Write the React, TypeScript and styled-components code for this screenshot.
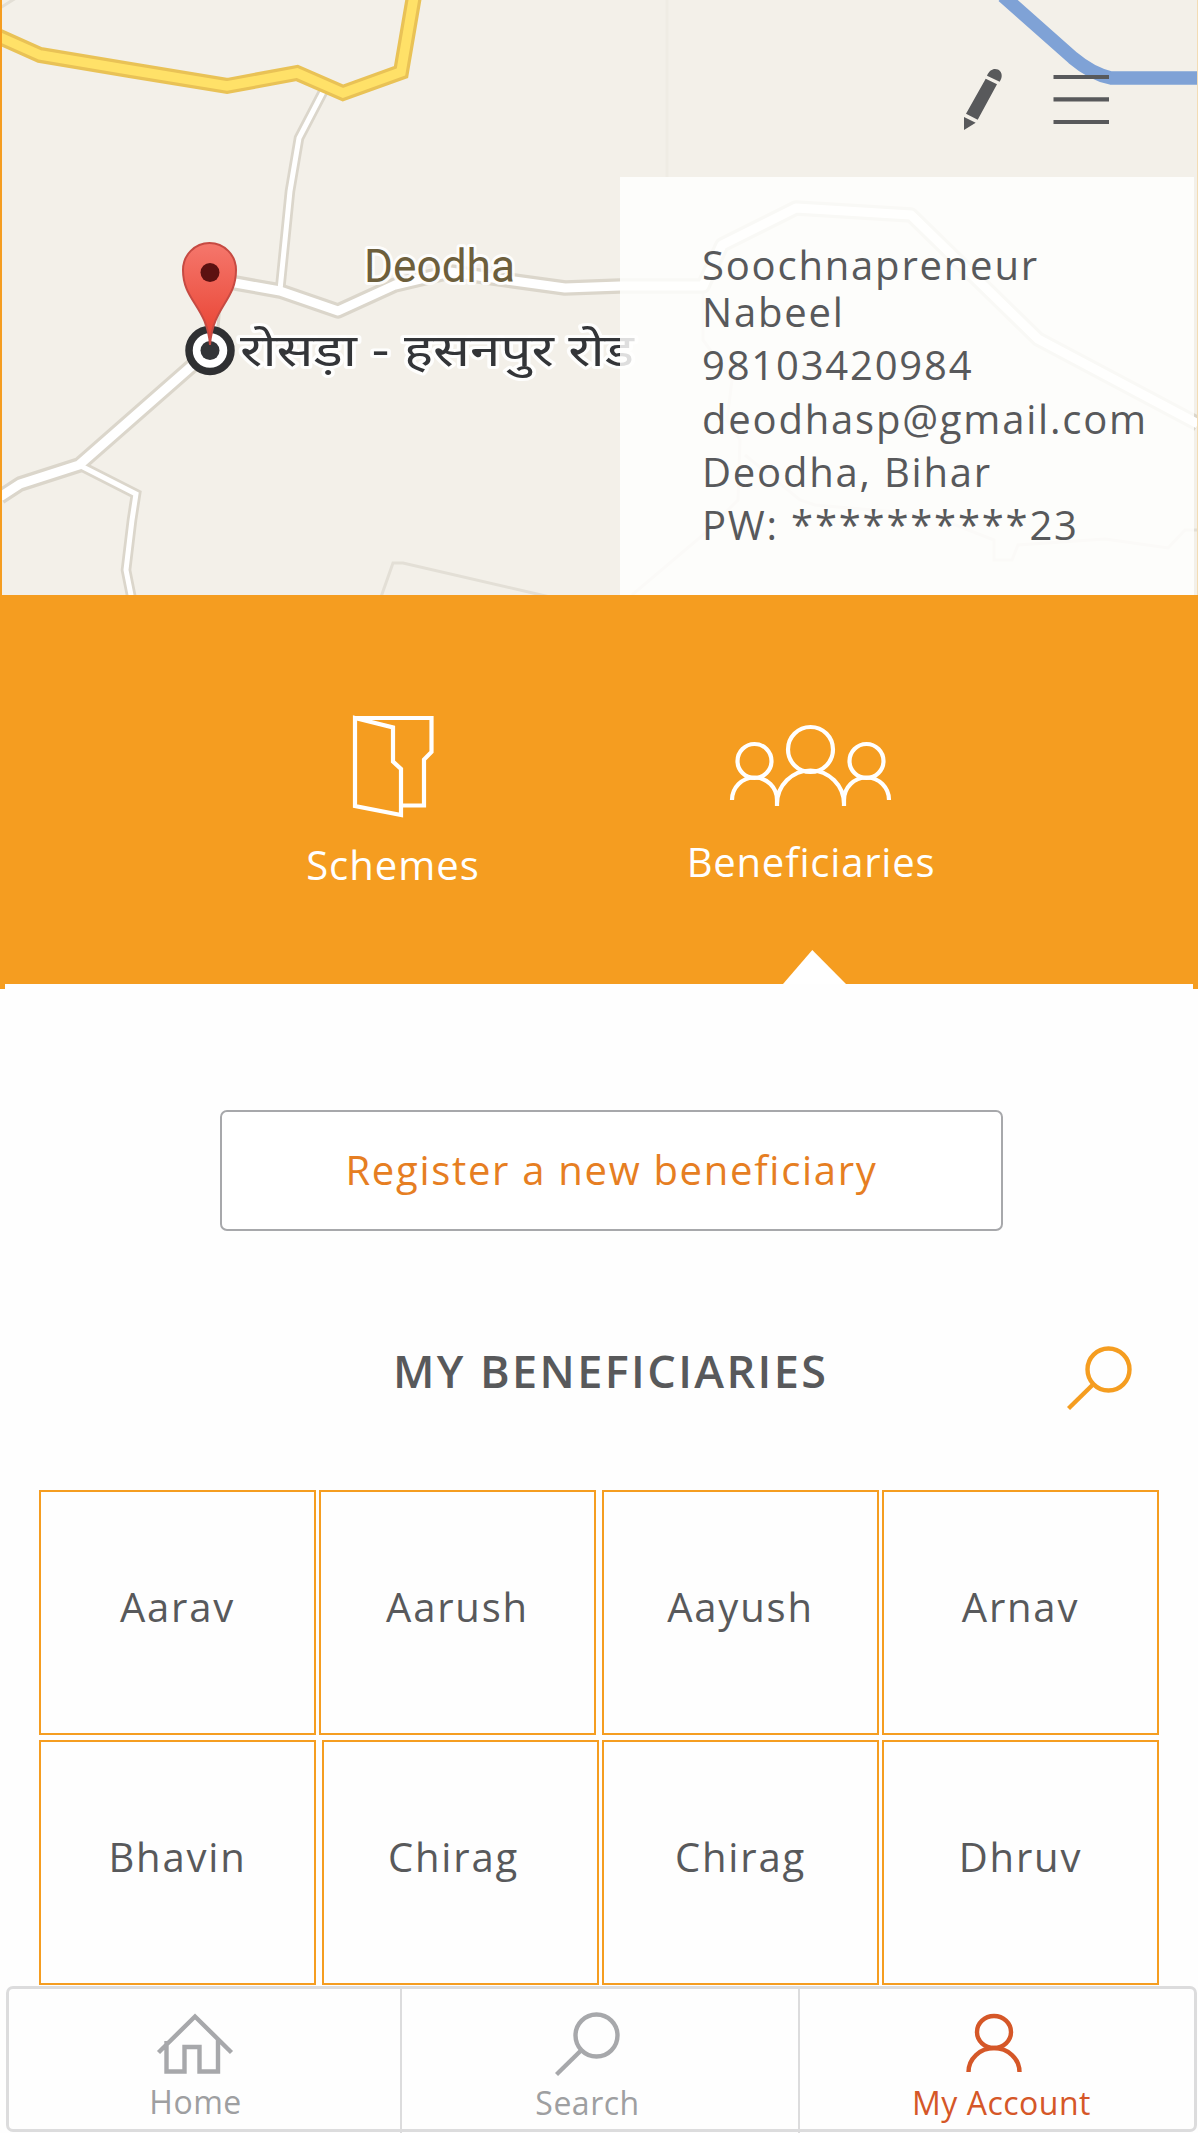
import React from "react";
import styled, { createGlobalStyle } from "styled-components";

const GlobalStyle = createGlobalStyle`
  *, *::before, *::after { box-sizing: border-box; }
  html, body { margin: 0; padding: 0; background: #fff; }
`;

const ORANGE = "#f59d20";
const INK = "#58595b";
const GREY = "#a7a8ab";
const RUST = "#d55728";

const Screen = styled.main`
  width: 1198px;
  height: 2133px;
  overflow: hidden;
  display: flex;
  flex-direction: column;
  background: #fefefe;
  color: ${INK};
  font-family: "Open Sans", "Noto Sans", sans-serif;
  font-size: 40px;
  line-height: 54px;
`;

const Hero = styled.header`
  position: relative;
  height: 595px;
  flex: none;
  border-left: 2px solid ${ORANGE};
  border-right: 1px solid #f3dcb4;
  padding-right: 3px;
  background: #f3f0e9;
  display: flex;
  flex-direction: column;
  align-items: flex-end;
`;

const MapLayer = styled.svg`
  position: absolute;
  left: 0;
  top: 0;
  width: 1195px;
  height: 595px;
`;

const Actions = styled.div`
  position: relative;
  height: 177px;
  padding: 68px 85px 0 0;
  display: flex;
  gap: 50px;
  align-items: flex-start;
`;

const IconButton = styled.button`
  border: 0;
  padding: 0;
  background: none;
  display: block;
  line-height: 0;
  svg { display: block; overflow: visible; }
`;

const Profile = styled.section`
  position: relative;
  width: 574px;
  height: 418px;
  padding: 61px 0 0 82px;
  background: rgba(255, 255, 254, 0.84);
`;

const ProfileLine = styled.p<{ $tight?: boolean }>`
  margin: 0;
  height: ${(p) => (p.$tight ? 47 : 53.3)}px;
  line-height: 54px;
  letter-spacing: 1.8px;
  white-space: nowrap;
`;

const Tabs = styled.nav`
  position: relative;
  height: 389px;
  flex: none;
  display: flex;
  background: ${ORANGE};
  color: #fff;
`;

const Tab = styled.a<{ $width: number; $top: number; $gap: number; $offset: number; $spacing: number }>`
  width: ${(p) => p.$width}px;
  margin-left: ${(p) => p.$offset}px;
  padding-top: ${(p) => p.$top}px;
  display: flex;
  flex-direction: column;
  align-items: center;
  gap: ${(p) => p.$gap}px;
  letter-spacing: ${(p) => p.$spacing}px;
  white-space: nowrap;
  svg { display: block; overflow: visible; }
`;

const TabPointer = styled.span`
  position: absolute;
  left: 783px;
  bottom: 0;
  width: 63px;
  height: 34px;
  background: #fff;
  clip-path: polygon(46.5% 0, 100% 100%, 0 100%);
`;

const Lip = styled.div`
  height: 5px;
  flex: none;
  border: solid ${ORANGE};
  border-width: 0 5px;
`;

const RegisterButton = styled.button`
  width: 783px;
  height: 121px;
  flex: none;
  margin: 121px 0 0 220px;
  padding: 0 0 2px;
  border: 2px solid #a7a8ab;
  border-radius: 7px;
  background: #fff;
  color: #e67e22;
  font: inherit;
  letter-spacing: 1.7px;
  font-variant-ligatures: none;
`;

const ListHeader = styled.div`
  height: 137px;
  flex: none;
  margin-top: 116px;
  padding: 0 66px 0 393px;
  display: flex;
  justify-content: space-between;
  align-items: flex-start;
  height: 143px;
`;

const Title = styled.h1`
  margin: -7px 0 0;
  font-size: 45px;
  line-height: 61px;
  font-weight: 600;
  letter-spacing: 2.4px;
  white-space: nowrap;
`;

const Rows = styled.div`
  height: 495px;
  flex: none;
  padding-left: 39px;
  display: flex;
  flex-direction: column;
  gap: 5px;
`;

const Row = styled.div`
  display: flex;
`;

const Tile = styled.div<{ $gap: number; $inset: number }>`
  width: 277px;
  height: 245px;
  margin-left: ${(p) => p.$gap}px;
  padding: 0 ${(p) => p.$inset}px 11px 0;
  border: 2px solid ${ORANGE};
  display: flex;
  align-items: center;
  justify-content: center;
  letter-spacing: 1.8px;
`;

const BottomBar = styled.footer`
  position: relative;
  width: 1191px;
  height: 146px;
  flex: none;
  margin: 1px 0 0 6px;
  border: 3px solid #dcdcdd;
  border-radius: 7px;
  display: flex;
`;

const BottomItem = styled.a<{ $width: number; $color: string; $gap: number; $inset: number; $last?: boolean }>`
  width: ${(p) => p.$width}px;
  height: 145px;
  padding: 24px ${(p) => p.$inset}px 0 0;
  border-right: ${(p) => (p.$last ? 0 : 2)}px solid #dcdcdd;
  display: flex;
  flex-direction: column;
  align-items: center;
  gap: ${(p) => p.$gap}px;
  color: ${(p) => p.$color};
  font-size: 32px;
  line-height: 44px;
  letter-spacing: 0.5px;
  white-space: nowrap;
  svg { display: block; overflow: visible; }
`;

const BottomLabel = styled.span<{ $indent?: number }>`
  padding-left: ${(p) => p.$indent ?? 0}px;
`;

const roads = {
  main: "M0 497 L20 484 L79 465 L210 350 L214 300 L224 281 L280 291 L338 311 L395 285 L450 272 L514 281 L565 288 L620 286 L703 286 L722 245 L796 208 L911 215 L1038 339 L1198 424",
  small: "M324 90 L299 138 L290 191 L280 290 M79 465 L136 494 L132 520 L126 570 L132 600",
  faint:
    "M0 8 L16 -2 M381 597 L393 563 L403 563 L550 597 M703 286 V340 L732 380 L727 420 L740 440 L738 500 L703 535 L632 595 M745 455 L800 500 L815 505 L930 515 L994 540 V560 H1012 L1018 545 L1105 539 L1168 548 L1185 530 H1198",
  highway: "M-5 35 L40 55 L130 70 L227 86 L297 73 L343 93 L401 72 L414 -4",
};

const MapView = () => (
  <MapLayer viewBox="2 0 1195 595" fill="none">
    <defs>
      <linearGradient id="pin" x1="0" y1="0" x2="0" y2="1">
        <stop offset="0" stopColor="#f5776c" />
        <stop offset="1" stopColor="#e8402f" />
      </linearGradient>
    </defs>
    <path d="M667 0 V177" stroke="#efece4" strokeWidth="3" />
    <path d={roads.faint} stroke="#e3dfd6" strokeWidth="3" />
    <path d={roads.small} stroke="#dbd6cb" strokeWidth="10.5" />
    <path d={roads.main} stroke="#dbd6cb" strokeWidth="15.5" strokeLinejoin="round" />
    <path d={roads.small} stroke="#fff" strokeWidth="5" />
    <path d={roads.main} stroke="#fff" strokeWidth="9" strokeLinejoin="round" />
    <path d={roads.highway} stroke="#e9c256" strokeWidth="16" />
    <path d={roads.highway} stroke="#ffe168" strokeWidth="9.5" />
    <path d="M1003 -4 L1073 58 Q1092 74 1111 78 H1198" stroke="#7fa2d6" strokeWidth="13.5" />
    <g stroke="#fff" strokeWidth="6" strokeLinejoin="round" paintOrder="stroke" strokeOpacity="0.9">
      <text x="364" y="282" fill="#6d5f3c" fontFamily="Roboto, sans-serif" fontSize="46" textLength="151" lengthAdjust="spacingAndGlyphs">
        Deodha
      </text>
      <text x="240" y="366" fill="#333538" fontFamily="Noto Sans Devanagari, Noto Sans, FreeSans, sans-serif" fontSize="44" textLength="394" lengthAdjust="spacingAndGlyphs">
        रोसड़ा - हसनपुर रोड
      </text>
    </g>
    <circle cx="210" cy="350.5" r="21" fill="#fff" stroke="#2f3032" strokeWidth="7.5" />
    <circle cx="210" cy="350.5" r="9.5" fill="#333538" />
    <path d="M210 345 C207 306 183 301 183 270 A26.5 27 0 0 1 236 270 C236 301 213 306 210 345Z" fill="url(#pin)" stroke="#c64a42" strokeWidth="2" />
    <circle cx="210" cy="272.5" r="9.5" fill="#5c1111" />
  </MapLayer>
);

const Magnifier = ({ color }: { color: string }) => (
  <svg width="64" height="64" viewBox="0 0 64 64" fill="none" stroke={color} strokeWidth="4.4">
    <circle cx="40.5" cy="22.5" r="21" />
    <path d="M25.5 37 L0.5 61.5" />
  </svg>
);

type Entry = { name: string; gap: number; inset?: number };

const rows: Entry[][] = [
  [
    { name: "Aarav", gap: 0 },
    { name: "Aarush", gap: 3 },
    { name: "Aayush", gap: 6 },
    { name: "Arnav", gap: 3 },
  ],
  [
    { name: "Bhavin", gap: 0 },
    { name: "Chirag", gap: 6, inset: 14 },
    { name: "Chirag", gap: 3 },
    { name: "Dhruv", gap: 3 },
  ],
];

export default function App() {
  return (
    <>
      <GlobalStyle />
      <Screen>
        <Hero>
          <MapView />
          <Actions>
            <IconButton aria-label="Edit">
              <svg width="39" height="62" viewBox="0 0 39 62" fill={INK}>
                <path d="M23 7.7 C25 3 28 1 31 1 C35.5 1 38 4.5 37.7 8 C37.6 10 36.8 11.8 35.7 13.7Z M21.7 10.7 L33 16.3 L13.7 51.7 L2 45.7Z M0 49 L11.7 54.7 L0 62Z" />
              </svg>
            </IconButton>
            <IconButton aria-label="Menu">
              <svg width="56" height="56" viewBox="0 0 56 56" stroke={INK} strokeWidth="4.2">
                <path d="M0.5 9H56M0.5 31.3H56M0.5 54H56" />
              </svg>
            </IconButton>
          </Actions>
          <Profile>
            <ProfileLine $tight>Soochnapreneur</ProfileLine>
            <ProfileLine>Nabeel</ProfileLine>
            <ProfileLine>98103420984</ProfileLine>
            <ProfileLine>deodhasp@gmail.com</ProfileLine>
            <ProfileLine>Deodha, Bihar</ProfileLine>
            <ProfileLine>PW: **********23</ProfileLine>
          </Profile>
        </Hero>
        <Tabs>
          <Tab $width={200} $offset={293} $top={121} $gap={20} $spacing={1}>
            <svg width="81" height="102" viewBox="0 0 81 102" fill="none" stroke="#fff" strokeWidth="4.2">
              <path d="M2 2 H78.5 V36 L71 43.5 V89.5 H49 M2 2 L40 11.5 V45.5 L48 53 V99 L2 90Z" />
            </svg>
            Schemes
          </Tab>
          <Tab $width={280} $offset={178} $top={130} $gap={29} $spacing={0.8}>
            <svg width="161" height="81" viewBox="1 0 161 81" fill="none" stroke="#fff" strokeWidth="4.2">
              <circle cx="80.5" cy="24.5" r="22.5" />
              <circle cx="24.5" cy="36" r="17" />
              <circle cx="136.5" cy="36" r="17" />
              <path d="M2 75 A22.5 22.5 0 0 1 47 75 V81 V79 A33.5 33.5 0 0 1 114 79 V81 V75 A22.5 22.5 0 0 1 159 75" />
            </svg>
            Beneficiaries
          </Tab>
          <TabPointer />
        </Tabs>
        <Lip />
        <RegisterButton>Register a new beneficiary</RegisterButton>
        <ListHeader>
          <Title>MY BENEFICIARIES</Title>
          <IconButton aria-label="Search beneficiaries">
            <Magnifier color={ORANGE} />
          </IconButton>
        </ListHeader>
        <Rows>
          {rows.map((row, i) => (
            <Row key={i}>
              {row.map((entry, j) => (
                <Tile key={j} $gap={entry.gap} $inset={entry.inset ?? 0}>
                  {entry.name}
                </Tile>
              ))}
            </Row>
          ))}
        </Rows>
        <BottomBar>
          <BottomItem $width={393} $color="#9e9fa1" $gap={5} $inset={18}>
            <svg width="74" height="62" viewBox="1.5 0 74 62" fill="none" stroke={GREY} strokeWidth="4.4">
              <path d="M1 39.5 L37.5 3.5 L74 39.5 M9 28 V58.5 H27 V34 H42 V58.5 H60.5 V27" />
            </svg>
            <BottomLabel>Home</BottomLabel>
          </BottomItem>
          <BottomItem $width={398} $color="#9e9fa1" $gap={4} $inset={25}>
            <Magnifier color={GREY} />
            <BottomLabel>Search</BottomLabel>
          </BottomItem>
          <BottomItem $width={394} $color={RUST} $gap={8} $inset={6} $last>
            <svg width="56" height="60" viewBox="0 0 56 60" fill="none" stroke={RUST} strokeWidth="4.4">
              <ellipse cx="28" cy="19" rx="17" ry="16" />
              <path d="M2.5 59 A25.5 24 0 0 1 53.5 59" />
            </svg>
            <BottomLabel $indent={15}>My Account</BottomLabel>
          </BottomItem>
        </BottomBar>
      </Screen>
    </>
  );
}
